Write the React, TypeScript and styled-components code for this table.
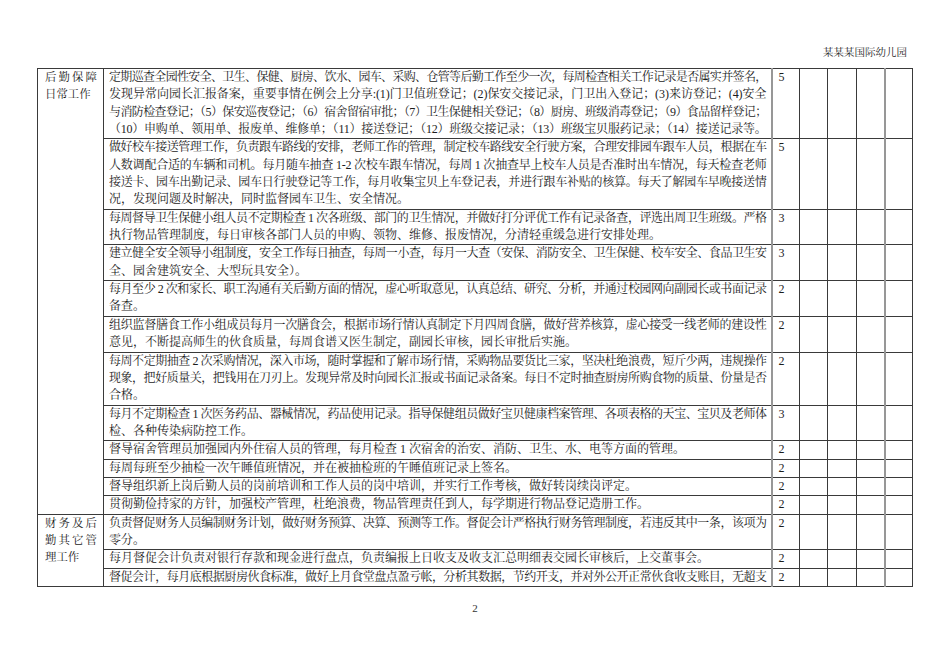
import React, { useLayoutEffect, useRef, useState } from 'react';
import styled, { createGlobalStyle } from 'styled-components';

const GlobalStyle = createGlobalStyle`
  html, body { margin: 0; padding: 0; background: #ffffff; }
  body {
    font-family: "Liberation Serif", "Noto Serif CJK SC", "Noto Sans CJK SC", serif;
    color: #1c1c1c;
  }
`;

const LINE = 17.35;

const Page = styled.div`
  width: 950px;
  min-height: 672px;
  padding-top: 46px;
  box-sizing: border-box;
  background: #ffffff;
`;

const Header = styled.div`
  font-size: 10.5px;
  line-height: 14px;
  text-align: right;
  padding-right: 43px;
  margin-bottom: 8px;
  color: #222;
`;

const Table = styled.table`
  border-collapse: collapse;
  table-layout: fixed;
  width: 875px;
  margin-left: 37px;
  font-size: 12px;
  line-height: ${LINE}px;
`;

const Col = styled.col<{ $w: number }>`
  width: ${(p) => p.$w}px;
`;

const Cell = styled.td<{ $soft?: boolean }>`
  border: 1px solid #3a3a3a;
  border-left: ${(p) => (p.$soft ? '2px solid #979797' : '1px solid #3a3a3a')};
  vertical-align: top;
  padding: 0;
`;

const LabelCell = styled(Cell)`
  padding: 0 6px 0 7px;
  font-size: 11.4px;
`;

const TextCell = styled(Cell)`
  padding: 0 4px 0 5px;
`;

const ScoreCell = styled(Cell)`
  padding: 0 0 0 6px;
`;

const LineText = styled.span<{ $last?: boolean; $measure?: boolean }>`
  display: block;
  height: ${LINE}px;
  overflow: hidden;
  white-space: ${(p) => (p.$measure ? 'nowrap' : 'normal')};
  text-align: ${(p) => (p.$last ? 'left' : 'justify')};
  text-align-last: ${(p) => (p.$last ? 'left' : 'justify')};
`;

const PageNumber = styled.div`
  margin-top: 14px;
  font-size: 11px;
  line-height: 14px;
  text-align: center;
  color: #333;
`;

const Line: React.FC<{ text: string; last?: boolean }> = ({ text, last }) => {
  const ref = useRef<HTMLSpanElement>(null);
  const [state, setState] = useState<{ done: boolean; ls: number }>({ done: false, ls: 0 });
  useLayoutEffect(() => {
    if (state.done) return;
    const el = ref.current;
    if (!el) return;
    const over = el.scrollWidth - el.clientWidth;
    const count = Math.max(1, Array.from(text).length);
    setState({ done: true, ls: over > 0 ? -(over + 4) / count : 0 });
  }, [state.done, text]);
  return (
    <LineText
      ref={ref}
      $last={last}
      $measure={!state.done}
      style={state.ls ? { letterSpacing: `${state.ls}px` } : undefined}
    >
      {text}
    </LineText>
  );
};

type Row = { lines: string[]; score: number; fullLast?: boolean };
type Group = { label: string[]; rows: Row[] };

const groups: Group[] = [
  {
    label: ['后勤保障', '日常工作'],
    rows: [
      {
        score: 5,
        fullLast: true,
        lines: [
          '定期巡查全园性安全、卫生、保健、厨房、饮水、园车、采购、仓管等后勤工作至少一次，每周检查相关工作记录是否属实并签名，',
          '发现异常向园长汇报备案，重要事情在例会上分享:(1)门卫值班登记；(2)保安交接记录，门卫出入登记；(3)来访登记；(4)安全',
          '与消防检查登记；（5）保安巡夜登记；（6）宿舍留宿审批；（7）卫生保健相关登记；（8）厨房、班级消毒登记；（9）食品留样登记；',
          '（10）申购单、领用单、报废单、维修单；（11）接送登记；（12）班级交接记录；（13）班级宝贝服药记录；（14）接送记录等。',
        ],
      },
      {
        score: 5,
        lines: [
          '做好校车接送管理工作，负责跟车路线的安排，老师工作的管理，制定校车路线安全行驶方案，合理安排园车跟车人员，根据在车',
          '人数调配合适的车辆和司机。每月随车抽查 1-2 次校车跟车情况，每周 1 次抽查早上校车人员是否准时出车情况，每天检查老师',
          '接送卡、园车出勤记录、园车日行驶登记等工作，每月收集宝贝上车登记表，并进行跟车补贴的核算。每天了解园车早晚接送情',
          '况，发现问题及时解决，同时监督园车卫生、安全情况。',
        ],
      },
      {
        score: 3,
        lines: [
          '每周督导卫生保健小组人员不定期检查 1 次各班级、部门的卫生情况，并做好打分评优工作有记录备查，评选出周卫生班级。严格',
          '执行物品管理制度，每日审核各部门人员的申购、领物、维修、报废情况，分清轻重缓急进行安排处理。',
        ],
      },
      {
        score: 3,
        lines: [
          '建立健全安全领导小组制度，安全工作每日抽查，每周一小查，每月一大查（安保、消防安全、卫生保健、校车安全、食品卫生安',
          '全、园舍建筑安全、大型玩具安全）。',
        ],
      },
      {
        score: 2,
        lines: [
          '每月至少 2 次和家长、职工沟通有关后勤方面的情况，虚心听取意见，认真总结、研究、分析，并通过校园网向副园长或书面记录',
          '备查。',
        ],
      },
      {
        score: 2,
        lines: [
          '组织监督膳食工作小组成员每月一次膳食会，根据市场行情认真制定下月四周食膳，做好营养核算，虚心接受一线老师的建设性',
          '意见，不断提高师生的伙食质量，每周食谱又医生制定，副园长审核，园长审批后实施。',
        ],
      },
      {
        score: 2,
        lines: [
          '每周不定期抽查 2 次采购情况，深入市场，随时掌握和了解市场行情，采购物品要货比三家，坚决杜绝浪费，短斤少两，违规操作',
          '现象，把好质量关，把钱用在刀刃上。发现异常及时向园长汇报或书面记录备案。每日不定时抽查厨房所购食物的质量、份量是否',
          '合格。',
        ],
      },
      {
        score: 3,
        lines: [
          '每月不定期检查 1 次医务药品、器械情况，药品使用记录。指导保健组员做好宝贝健康档案管理、各项表格的天宝、宝贝及老师体',
          '检、各种传染病防控工作。',
        ],
      },
      {
        score: 2,
        lines: ['督导宿舍管理员加强园内外住宿人员的管理，每月检查 1 次宿舍的治安、消防、卫生、水、电等方面的管理。'],
      },
      { score: 2, lines: ['每周每班至少抽检一次午睡值班情况，并在被抽检班的午睡值班记录上签名。'] },
      { score: 2, lines: ['督导组织新上岗后勤人员的岗前培训和工作人员的岗中培训，并实行工作考核，做好转岗续岗评定。'] },
      { score: 2, lines: ['贯彻勤俭持家的方针，加强校产管理，杜绝浪费，物品管理责任到人，每学期进行物品登记造册工作。'] },
    ],
  },
  {
    label: ['财务及后', '勤其它管', '理工作'],
    rows: [
      {
        score: 2,
        lines: [
          '负责督促财务人员编制财务计划，做好财务预算、决算、预测等工作。督促会计严格执行财务管理制度，若违反其中一条，该项为',
          '零分。',
        ],
      },
      { score: 2, lines: ['每月督促会计负责对银行存款和现金进行盘点，负责编报上日收支及收支汇总明细表交园长审核后，上交董事会。'] },
      {
        score: 2,
        fullLast: true,
        lines: ['督促会计，每月底根据厨房伙食标准，做好上月食堂盘点盈亏帐，分析其数据，节约开支，并对外公开正常伙食收支账目，无超支'],
      },
    ],
  },
];

const COLS = [66, 668, 28, 28, 29, 28, 28];
const BLANKS = [0, 1, 2, 3];

export default function App() {
  return (
    <>
      <GlobalStyle />
      <Page>
        <Header>某某某国际幼儿园</Header>
        <Table>
          <colgroup>
            {COLS.map((w, i) => (
              <Col key={i} $w={w} />
            ))}
          </colgroup>
          <tbody>
            {groups.map((g, gi) =>
              g.rows.map((row, ri) => (
                <tr key={`${gi}-${ri}`}>
                  {ri === 0 && (
                    <LabelCell rowSpan={g.rows.length}>
                      {g.label.map((l, li) => (
                        <Line key={li} text={l} last={li === g.label.length - 1} />
                      ))}
                    </LabelCell>
                  )}
                  <TextCell>
                    {row.lines.map((l, li) => (
                      <Line key={li} text={l} last={li === row.lines.length - 1 && !row.fullLast} />
                    ))}
                  </TextCell>
                  <ScoreCell $soft>{row.score}</ScoreCell>
                  {BLANKS.map((b) => (
                    <Cell key={b} $soft={b === 3} />
                  ))}
                </tr>
              ))
            )}
          </tbody>
        </Table>
        <PageNumber>2</PageNumber>
      </Page>
    </>
  );
}
